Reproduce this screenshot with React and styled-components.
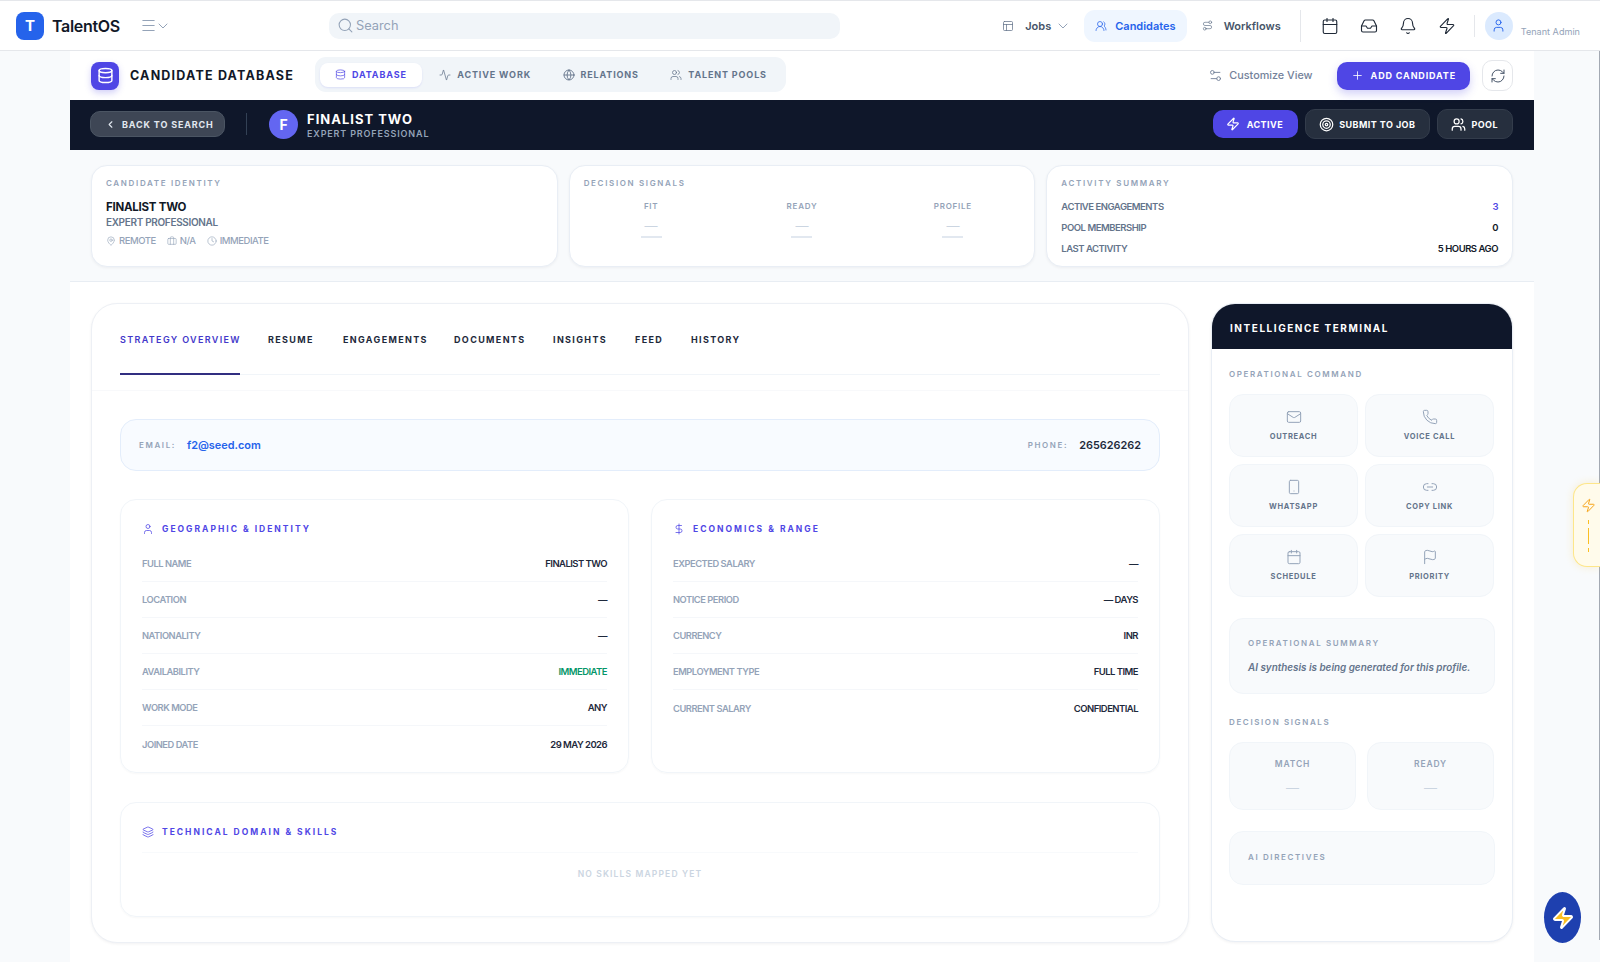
import React from "react";
import styled, { createGlobalStyle } from "styled-components";
import {
  Activity, Bell, Briefcase, Calendar, ChevronDown, ChevronLeft, Clock, Database, DollarSign, Flag, Globe, Inbox,
  Layers, Link2, Mail, MapPin, Menu, PanelsTopLeft, Phone, Plus, RefreshCw, Route, Search as SearchIcon, Settings2, Smartphone, Target, User, Users, UsersRound, Zap,
} from "lucide-react";

const Global = createGlobalStyle`
  html, body { margin: 0; padding: 0; background: #f8fafc; }
  body { font-family: Inter, "Liberation Sans", sans-serif; color: #0f172a; overflow: hidden; }
  * { box-sizing: border-box; }
`;

const Page = styled.div`
  position: relative; width: 1600px; height: 962px; overflow: hidden; background: #f8fafc;
`;
const EdgeLine = styled.div`
  position: absolute; right: 0; top: 51px; width: 1px; height: 889px; background: #a3a9b3;
`;
const TopBar = styled.header`
  height: 51px; background: #fff; border-top: 1px solid #e5e7eb; border-bottom: 1px solid #e5e7eb;
  display: flex; align-items: center; padding: 0 20px 0 16px;
`;
const Logo = styled.div`
  width: 28px; height: 28px; border-radius: 8px; background: #2563eb; color: #fff;
  display: flex; align-items: center; justify-content: center; font-size: 15px; font-weight: 700;
`;
const Brand = styled.div`
  margin-left: 8px; width: 88px; font-size: 16px; font-weight: 600; letter-spacing: -0.3px; color: #111827;
`;
const MenuBtn = styled.div`
  display: flex; align-items: center; color: #94a3b8; width: 189px;
  svg + svg { margin-left: -2px; }
`;
const SearchBox = styled.div`
  width: 511px; height: 26px; background: #f1f5f9; border-radius: 10px; display: flex; align-items: center; gap: 2px;
  padding-left: 8px; color: #94a3b8; font-size: 12.8px;
`;
const Nav = styled.nav`
  margin-left: auto; display: flex; align-items: center; height: 100%; gap: 4px;
`;
const NavItem = styled.div`
  display: flex; align-items: center; gap: ${p => (p.$active ? 8 : 11)}px; height: 32px; border-radius: 11px;
  padding: 0 11px; font-size: 11px; font-weight: 600;
  color: ${p => (p.$active ? "#2563eb" : "#475569")}; background: ${p => (p.$active ? "#eff6ff" : "transparent")};
  svg { color: ${p => (p.$active ? "#2563eb" : "#64748b")}; }
`;
const NavChevron = styled.span`
  display: flex; margin: 0 -2px 0 -7px;
  svg { color: #94a3b8; }
`;
const NavSep = styled.div`
  width: 1px; height: ${p => p.$h}px; background: #e5e7eb; margin: 0 ${p => p.$r}px 0 ${p => p.$l}px;
`;
const IconRow = styled.div`
  display: flex; align-items: center; gap: 21px; color: #1f2937;
`;
const Avatar = styled.div`
  width: 28px; height: 28px; border-radius: 50%; background: #dbeafe; color: #2563eb;
  display: flex; align-items: center; justify-content: center; margin-left: -4px;
`;
const TenantName = styled.div`
  margin: 12px 0 0 4px; font-size: 9.1px; color: #94a3b8; white-space: nowrap;
`;
const Column = styled.main`
  width: 1464px; margin-left: 70px;
`;
const SubHeader = styled.div`
  height: 49px; background: #fff; display: flex; align-items: center; padding: 0 21px;
`;
const DbIcon = styled.div`
  width: 28px; height: 28px; border-radius: 8px; background: #4f46e5; color: #fff;
  display: flex; align-items: center; justify-content: center; box-shadow: 0 3px 6px rgba(79,70,229,.25);
`;
const PageTitle = styled.h1`
  margin: 0 0 0 11px; width: 185px; font-size: 12.5px; font-weight: 700; letter-spacing: 1.2px; color: #111827; white-space: nowrap;
`;
const SegTabs = styled.div`
  height: 35px; background: #f1f5f9; border-radius: 11px; padding: 0 5px; display: flex; align-items: center; gap: 3px; margin-top: -2px;
`;
const SegTab = styled.div`
  height: 24px; padding: ${p => (p.$active ? "0 15px" : "0 14px 0 14.5px")}; border-radius: 8px; display: flex; align-items: center; gap: 6px;
  font-size: 9px; font-weight: 700; letter-spacing: .86px;
  color: ${p => (p.$active ? "#4f46e5" : "#64748b")}; background: ${p => (p.$active ? "#fff" : "transparent")};
  box-shadow: ${p => (p.$active ? "0 1px 2px rgba(99,102,241,.15)" : "none")};
`;
const Customize = styled.div`
  margin-left: auto; display: flex; align-items: center; gap: 6px; font-size: 10.8px; font-weight: 500; color: #74829a;
`;
const AddBtn = styled.div`
  margin-left: 24px; height: 28px; border-radius: 10px; background: #4f46e5; color: #fff; padding: 0 14px;
  display: flex; align-items: center; gap: 7px; font-size: 9px; font-weight: 700; letter-spacing: .85px;
  box-shadow: 0 4px 8px rgba(79,70,229,.25);
`;
const RefreshBtn = styled.div`
  margin-left: 12px; width: 31px; height: 31px; border-radius: 10px; background: #fff; border: 1px solid #e5e7eb;
  color: #475569; display: flex; align-items: center; justify-content: center;
`;
const DarkBar = styled.div`
  height: 50px; background: #0f172a; display: flex; align-items: center; padding: 0 21px 2px 20px;
`;
const BackBtn = styled.div`
  width: 135px; height: 26px; border-radius: 10px; background: #3e4655; border: 1px solid #4b5563; color: #e2e8f0;
  display: flex; align-items: center; gap: 6px; padding-left: 14px; font-size: 9px; font-weight: 700; letter-spacing: .85px; white-space: nowrap;
`;
const DarkSep = styled.div`
  width: 1px; height: 22px; background: #334155; margin: 0 22px 0 21px;
`;
const FAvatar = styled.div`
  width: 29px; height: 29px; border-radius: 50%; background: #6366f1; color: #fff; font-size: 14px; font-weight: 700;
  display: flex; align-items: center; justify-content: center;
`;
const NameBlock = styled.div`
  margin-left: 9px; padding-top: 3px; display: flex; flex-direction: column; gap: 1px;
`;
const DarkName = styled.div`
  font-size: 13px; line-height: 15px; font-weight: 700; letter-spacing: 1px; color: #fff;
`;
const DarkSub = styled.div`
  font-size: 9px; line-height: 11px; font-weight: 600; letter-spacing: .85px; color: #94a3b8;
`;
const DarkActions = styled.div`
  margin-left: auto; display: flex; align-items: center; gap: 7px;
`;
const DarkBtn = styled.div`
  height: ${p => (p.$primary ? 28 : 30)}px; border-radius: 10px; padding: ${p => (p.$primary ? "0 15px 0 13px" : "0 14px 0 13px")};
  display: flex; align-items: center; gap: ${p => (p.$primary ? 7 : 5)}px;
  font-size: 9px; font-weight: 700; letter-spacing: .45px; color: #fff;
  background: ${p => (p.$primary ? "#4f46e5" : "#262f3e")}; border: ${p => (p.$primary ? "none" : "1px solid #333c4b")};
`;
const InfoBand = styled.section`
  height: 132px; padding: 15px 21px 0; display: grid; grid-template-columns: repeat(3, 1fr); gap: 11px;
  border-bottom: 1px solid #e8edf3; align-items: start;
`;
const InfoCard = styled.div`
  height: 102px; background: #fff; border: 1px solid #e9eef5; border-radius: 16px; padding: 11px 14px;
  box-shadow: 0 1px 3px rgba(15,23,42,.05);
`;
const InfoTitle = styled.div`
  font-size: 8px; line-height: 12px; font-weight: 600; letter-spacing: 1.66px; color: #94a3b8;
`;
const IdName = styled.div`
  margin-top: 11px; font-size: 11.5px; line-height: 14px; font-weight: 700; letter-spacing: -.25px; color: #111827;
`;
const IdRole = styled.div`
  margin-top: 1px; font-size: 10px; line-height: 14px; font-weight: 600; letter-spacing: -.32px; color: #64748b;
`;
const MetaRow = styled.div`
  margin-top: 5px; display: flex; gap: 11px; font-size: 9.5px; line-height: 14px; font-weight: 500; letter-spacing: -.45px; color: #94a3b8;
`;
const MetaItem = styled.span`
  display: flex; align-items: center; gap: 3px;
`;
const SignalGrid = styled.div`
  margin: 11px -8px 0; display: grid; grid-template-columns: repeat(3, 1fr);
`;
const SignalCell = styled.div`
  display: flex; flex-direction: column; align-items: center;
`;
const SignalLabel = styled.div`
  font-size: 8px; line-height: 12px; font-weight: 600; letter-spacing: .75px; color: #94a3b8;
`;
const SignalDash = styled.div`
  margin-top: 6px; font-size: 13px; line-height: 16px; color: #cbd5e1;
`;
const SignalBar = styled.div`
  margin-top: 2px; width: 21px; height: 1.5px; background: #e2e8f0;
`;
const StatList = styled.div`
  margin-top: 11px; display: flex; flex-direction: column; gap: 7.4px;
`;
const StatRow = styled.div`
  display: flex; justify-content: space-between; font-size: 9.5px; line-height: 13.5px; font-weight: 600; letter-spacing: -.48px; color: #64748b;
`;
const StatValue = styled.span`
  font-weight: 600; color: ${p => p.$color || "#111827"};
`;
const Body = styled.div`
  height: 680px; background: #fff; padding: 21px 21px 0 21px; display: flex; gap: 22px; align-items: flex-start;
`;
const MainCard = styled.div`
  width: 1098px; height: 640px; background: #fff; border: 1px solid #edf0f5; border-radius: 26px;
  box-shadow: 0 1px 3px rgba(15,23,42,.06);
`;
const TabsWrap = styled.div`
  height: 87px; padding: 0 28px; border-bottom: 1px solid #f8f9fb;
`;
const TabsLine = styled.div`
  height: 71px; display: flex; gap: 28px; border-bottom: 1.5px solid #f1f5f9;
`;
const Tab = styled.div`
  height: 71px; padding-top: 29px; font-size: 9px; line-height: 14px; font-weight: ${p => (p.$active ? 600 : 700)}; letter-spacing: 1.35px;
  white-space: nowrap; color: ${p => (p.$active ? "#4338ca" : "#1e293b")};
  border-bottom: 2px solid ${p => (p.$active ? "#312e81" : "transparent")};
  margin-bottom: -1.5px;
  width: ${p => p.$w}px;
`;
const CardBody = styled.div`
  padding: 28px 28px 0 28px;
`;
const ContactStrip = styled.div`
  height: 52px; border-radius: 16px; background: #f8fbff; border: 1px solid #e3edfb; padding: 0 18px;
  display: flex; align-items: center; justify-content: space-between;
`;
const ContactPair = styled.div`
  display: flex; align-items: center; gap: 11px;
`;
const ContactLabel = styled.span`
  font-size: 8px; font-weight: 600; letter-spacing: 1.6px; color: #94a3b8;
`;
const ContactValue = styled.span`
  font-size: 10.9px; font-weight: 600; color: ${p => p.$color};
`;
const TwoCol = styled.div`
  margin-top: 28px; display: grid; grid-template-columns: 509px 509px; gap: 22px;
`;
const Panel = styled.div`
  height: ${p => p.$h}px; border: 1px solid #f1f5f9; border-radius: 16px; padding: 21px 21px 0 21px;
  box-shadow: 0 1px 2px rgba(15,23,42,.03);
`;
const PanelHead = styled.div`
  height: 15px; display: flex; align-items: center; gap: 8px; color: #4f46e5; font-size: 8.5px; font-weight: 700; letter-spacing: 2px; white-space: nowrap;
`;
const Rows = styled.div`
  margin-top: 10px;
`;
const Row = styled.div`
  height: 36px; display: flex; align-items: center; justify-content: space-between; border-bottom: 1px solid #f5f7fa;
  font-size: 9.3px; font-weight: 600; letter-spacing: -.45px; color: #94a3b8;
  &:last-child { border-bottom: none; }
`;
const RowVal = styled.span`
  font-size: 9.5px; font-weight: 600; letter-spacing: -.55px; color: ${p => p.$color || "#1e293b"};
`;
const SkillsPanel = styled(Panel)`
  margin-top: 29px; padding-top: 21px;
`;
const SkillsLine = styled.div`
  margin-top: 13px; height: 1px; background: #f8fafc;
`;
const Empty = styled.div`
  margin-top: 15px; text-align: center; font-size: 8.5px; line-height: 12px; font-weight: 600; letter-spacing: 1.15px; color: #cbd5e1;
`;
const Terminal = styled.aside`
  width: 302px; height: 639px; background: #fff; border: 1px solid #e9eef5; border-radius: 24px; overflow: hidden;
  box-shadow: 0 1px 3px rgba(15,23,42,.06);
`;
const TermHead = styled.div`
  height: 45px; background: #0f172a; color: #fff; display: flex; align-items: center; padding: 3px 17px 0 18px;
  font-size: 10px; font-weight: 700; letter-spacing: 1.55px; white-space: nowrap;
`;
const TermBody = styled.div`
  padding: 19px 17px 0;
`;
const TermLabel = styled.div`
  font-size: 8px; line-height: 12px; font-weight: 600; letter-spacing: 1.62px; color: #94a3b8; white-space: nowrap;
`;
const ActionGrid = styled.div`
  margin-top: 14px; display: grid; grid-template-columns: 129px 129px; gap: 7px;
`;
const ActionCard = styled.div`
  height: 63px; background: #f8fafc; border: 1px solid #f1f5f9; border-radius: 14px; color: #94a3b8;
  display: flex; flex-direction: column; align-items: center; padding-top: 14px; gap: 6px;
`;
const ActionLabel = styled.div`
  font-size: 7.5px; line-height: 12px; font-weight: 700; letter-spacing: .68px; color: #64748b;
`;
const SummaryCard = styled.div`
  margin-top: 21px; height: 76px; background: #f8fafc; border: 1px solid #f1f5f9; border-radius: 14px; padding: 18px 18px 0;
`;
const SummaryText = styled.div`
  margin-top: 11px; font-size: 9.9px; line-height: 14px; font-style: italic; font-weight: 600; color: #64748b; white-space: nowrap;
`;
const DecisionLabel = styled(TermLabel)`
  margin-top: 22px;
`;
const DecisionGrid = styled.div`
  margin-top: 14px; display: grid; grid-template-columns: 127px 127px; gap: 11px;
`;
const DecisionCard = styled.div`
  height: 68px; background: #f8fafc; border: 1px solid #f1f5f9; border-radius: 14px;
  display: flex; flex-direction: column; align-items: center; padding-top: 15px;
`;
const DecisionName = styled.div`
  font-size: 8.5px; line-height: 12px; font-weight: 600; letter-spacing: .85px; color: #94a3b8;
`;
const DecisionDash = styled.div`
  margin-top: 10px; font-size: 13px; line-height: 16px; color: #cbd5e1;
`;
const DirectivesCard = styled.div`
  margin-top: 21px; height: 54px; background: #f8fafc; border: 1px solid #f1f5f9; border-radius: 14px; padding: 19px 18px 0;
`;
const SideTab = styled.div`
  position: absolute; right: 0; top: 483px; width: 27px; height: 84px; background: #fffbeb; border: 1px solid #fde68a; border-right: none;
  border-radius: 14px 0 0 14px; box-shadow: 0 0 8px rgba(251,191,36,.2); display: flex; flex-direction: column; align-items: center; padding: 14px 0 0 2px; color: #f59e0b;
`;
const SideDash = styled.div`
  margin-top: 7px; width: 1px; height: 32px;
  background: linear-gradient(#fbbf24 0 4px, transparent 4px 8px, #fbbf24 8px 24px, transparent 24px 28px, #fbbf24 28px);
`;
const Fab = styled.div`
  position: absolute; left: 1544px; top: 892px; width: 37px; height: 51px; border-radius: 50%; background: #1e40af;
  display: flex; align-items: center; justify-content: center;
`;

const S = ({ as: I, s = 12, w = 1.5 }) => <I size={s} strokeWidth={w} />;

const geo = [["FULL NAME", "FINALIST TWO"], ["LOCATION", "—"], ["NATIONALITY", "—"], ["AVAILABILITY", "IMMEDIATE", "#059669"], ["WORK MODE", "ANY"], ["JOINED DATE", "29 MAY 2026"]];
const eco = [["EXPECTED SALARY", "—"], ["NOTICE PERIOD", "— DAYS"], ["CURRENCY", "INR"], ["EMPLOYMENT TYPE", "FULL TIME"], ["CURRENT SALARY", "CONFIDENTIAL"]];
const actions = [[Mail, "OUTREACH"], [Phone, "VOICE CALL"], [Smartphone, "WHATSAPP"], [Link2, "COPY LINK"], [Calendar, "SCHEDULE"], [Flag, "PRIORITY"]];
const tabs = [["STRATEGY OVERVIEW", 120], ["RESUME", 47], ["ENGAGEMENTS", 83], ["DOCUMENTS", 71], ["INSIGHTS", 54], ["FEED", 28], ["HISTORY", 48]];

export default function App() {
  return (
    <Page>
      <Global />
      <TopBar>
        <Logo>T</Logo>
        <Brand>TalentOS</Brand>
        <MenuBtn><S as={Menu} s={17} /><S as={ChevronDown} s={16} /></MenuBtn>
        <SearchBox><S as={SearchIcon} s={17} />Search</SearchBox>
        <Nav>
          <NavItem><S as={PanelsTopLeft} s={12} />Jobs<NavChevron><S as={ChevronDown} s={16} /></NavChevron></NavItem>
          <NavItem $active><S as={UsersRound} s={12} />Candidates</NavItem>
          <NavItem><S as={Route} s={11} />Workflows</NavItem>
          <NavSep $h={32} $l={4} $r={16} />
          <IconRow>
            <S as={Calendar} s={18} />
            <S as={Inbox} s={18} />
            <S as={Bell} s={18} />
            <S as={Zap} s={18} />
          </IconRow>
          <NavSep $h={22} $l={14} $r={10} />
          <Avatar><S as={User} s={15} /></Avatar>
          <TenantName>Tenant Admin</TenantName>
        </Nav>
      </TopBar>
      <Column>
        <SubHeader>
          <DbIcon><S as={Database} s={17} w={2} /></DbIcon>
          <PageTitle>CANDIDATE DATABASE</PageTitle>
          <SegTabs>
            <SegTab $active><S as={Database} s={11} />DATABASE</SegTab>
            <SegTab><S as={Activity} s={12} />ACTIVE WORK</SegTab>
            <SegTab><S as={Globe} s={12} w={1.8} />RELATIONS</SegTab>
            <SegTab><S as={Users} s={12} />TALENT POOLS</SegTab>
          </SegTabs>
          <Customize><S as={Settings2} s={15} />Customize View</Customize>
          <AddBtn><S as={Plus} s={13} />ADD CANDIDATE</AddBtn>
          <RefreshBtn><S as={RefreshCw} s={16} /></RefreshBtn>
        </SubHeader>
        <DarkBar>
          <BackBtn><S as={ChevronLeft} s={11} w={2.4} />BACK TO SEARCH</BackBtn>
          <DarkSep />
          <FAvatar>F</FAvatar>
          <NameBlock>
            <DarkName>FINALIST TWO</DarkName>
            <DarkSub>EXPERT PROFESSIONAL</DarkSub>
          </NameBlock>
          <DarkActions>
            <DarkBtn $primary><S as={Zap} s={14} w={2} />ACTIVE</DarkBtn>
            <DarkBtn><S as={Target} s={15} w={2} />SUBMIT TO JOB</DarkBtn>
            <DarkBtn><S as={Users} s={15} w={2} />POOL</DarkBtn>
          </DarkActions>
        </DarkBar>
        <InfoBand>
          <InfoCard>
            <InfoTitle>CANDIDATE IDENTITY</InfoTitle>
            <IdName>FINALIST TWO</IdName>
            <IdRole>EXPERT PROFESSIONAL</IdRole>
            <MetaRow>
              <MetaItem><S as={MapPin} s={10} />REMOTE</MetaItem>
              <MetaItem><S as={Briefcase} s={10} />N/A</MetaItem>
              <MetaItem><S as={Clock} s={10} />IMMEDIATE</MetaItem>
            </MetaRow>
          </InfoCard>
          <InfoCard>
            <InfoTitle>DECISION SIGNALS</InfoTitle>
            <SignalGrid>
              {["FIT", "READY", "PROFILE"].map(l => (
                <SignalCell key={l}>
                  <SignalLabel>{l}</SignalLabel>
                  <SignalDash>—</SignalDash>
                  <SignalBar />
                </SignalCell>
              ))}
            </SignalGrid>
          </InfoCard>
          <InfoCard>
            <InfoTitle>ACTIVITY SUMMARY</InfoTitle>
            <StatList>
              <StatRow>ACTIVE ENGAGEMENTS<StatValue $color="#4f46e5">3</StatValue></StatRow>
              <StatRow>POOL MEMBERSHIP<StatValue>0</StatValue></StatRow>
              <StatRow>LAST ACTIVITY<StatValue>5 HOURS AGO</StatValue></StatRow>
            </StatList>
          </InfoCard>
        </InfoBand>
        <Body>
          <MainCard>
            <TabsWrap>
              <TabsLine>
                {tabs.map(([t, w], i) => <Tab key={t} $active={i === 0} $w={w}>{t}</Tab>)}
              </TabsLine>
            </TabsWrap>
            <CardBody>
              <ContactStrip>
                <ContactPair><ContactLabel>EMAIL:</ContactLabel><ContactValue $color="#2563eb">f2@seed.com</ContactValue></ContactPair>
                <ContactPair><ContactLabel>PHONE:</ContactLabel><ContactValue $color="#1e293b">265626262</ContactValue></ContactPair>
              </ContactStrip>
              <TwoCol>
                <Panel $h={274}>
                  <PanelHead><S as={User} s={12} />GEOGRAPHIC &amp; IDENTITY</PanelHead>
                  <Rows>{geo.map(([l, v, c]) => <Row key={l}>{l}<RowVal $color={c}>{v}</RowVal></Row>)}</Rows>
                </Panel>
                <Panel $h={274}>
                  <PanelHead><S as={DollarSign} s={12} />ECONOMICS &amp; RANGE</PanelHead>
                  <Rows>{eco.map(([l, v]) => <Row key={l}>{l}<RowVal>{v}</RowVal></Row>)}</Rows>
                </Panel>
              </TwoCol>
              <SkillsPanel $h={115}>
                <PanelHead><S as={Layers} s={12} />TECHNICAL DOMAIN &amp; SKILLS</PanelHead>
                <SkillsLine />
                <Empty>NO SKILLS MAPPED YET</Empty>
              </SkillsPanel>
            </CardBody>
          </MainCard>
          <Terminal>
            <TermHead>INTELLIGENCE TERMINAL</TermHead>
            <TermBody>
              <TermLabel>OPERATIONAL COMMAND</TermLabel>
              <ActionGrid>
                {actions.map(([I, l]) => (
                  <ActionCard key={l}><S as={I} s={16} /><ActionLabel>{l}</ActionLabel></ActionCard>
                ))}
              </ActionGrid>
              <SummaryCard>
                <TermLabel>OPERATIONAL SUMMARY</TermLabel>
                <SummaryText>AI synthesis is being generated for this profile.</SummaryText>
              </SummaryCard>
              <DecisionLabel>DECISION SIGNALS</DecisionLabel>
              <DecisionGrid>
                {["MATCH", "READY"].map(l => (
                  <DecisionCard key={l}><DecisionName>{l}</DecisionName><DecisionDash>—</DecisionDash></DecisionCard>
                ))}
              </DecisionGrid>
              <DirectivesCard><TermLabel>AI DIRECTIVES</TermLabel></DirectivesCard>
            </TermBody>
          </Terminal>
        </Body>
      </Column>
      <EdgeLine />
      <SideTab><S as={Zap} s={15} /><SideDash /></SideTab>
      <Fab><Zap size={24} strokeWidth={2} color="#fff" fill="#fbbf24" /></Fab>
    </Page>
  );
}
